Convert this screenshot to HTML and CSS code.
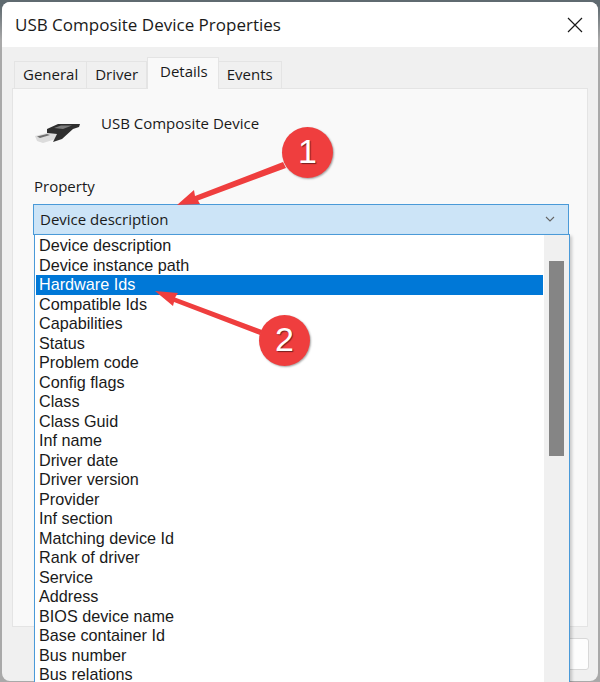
FILE: index.html
```html
<!DOCTYPE html>
<html lang="en">
<head>
    <meta charset="UTF-8">
    <meta name="viewport" content="width=device-width, initial-scale=1.0">
    <title>USB Composite Device Properties</title>
    <link rel="stylesheet" href="styles.css">
</head>
<body>
    <div class="window">
        <div class="titlebar">
            <span class="title">USB Composite Device Properties</span>
            <svg class="close" width="16" height="16" viewBox="0 0 16 16"><path d="M1 1L15 15M15 1L1 15" stroke="#1a1a1a" stroke-width="1.2" fill="none"/></svg>
        </div>
        <div class="content">
            <div class="tabs">
                <div class="tab">General</div>
                <div class="tab">Driver</div>
                <div class="tab active">Details</div>
                <div class="tab">Events</div>
            </div>
            <div class="panel">
                <div class="device">
                    <svg class="usb-icon" width="48" height="24" viewBox="0 0 48 24">
                        <path d="M1 14L13 11L23 12L22 17L9 21L3 19Z" fill="#dcdcdc"/>
                        <path d="M3 14.500L13 12L16 13L6 16Z" fill="#6f6f6f"/>
                        <path d="M13 7L24 2L41 2L46 2L45 5L39 7L28 17L19 20L23 12L13 11Z" fill="#2f2f2f"/>
                        <path d="M20 6L27 3.500L38 3.500L29 7Z" fill="#7c7c7c"/>
                    </svg>
                    <span class="device-name">USB Composite Device</span>
                </div>
                <div class="prop-label">Property</div>
                <div class="combo">
                    <span>Device description</span>
                    <svg width="10" height="6" viewBox="0 0 10 6"><path d="M1 1L5 5L9 1" stroke="#666" stroke-width="1.1" fill="none"/></svg>
                </div>
            </div>
            <div class="bottom-btn"></div>
        </div>
    </div>

    <div class="dropdown">
        <ul class="options">
            <li>Device description</li>
            <li>Device instance path</li>
            <li class="selected">Hardware Ids</li>
            <li>Compatible Ids</li>
            <li>Capabilities</li>
            <li>Status</li>
            <li>Problem code</li>
            <li>Config flags</li>
            <li>Class</li>
            <li>Class Guid</li>
            <li>Inf name</li>
            <li>Driver date</li>
            <li>Driver version</li>
            <li>Provider</li>
            <li>Inf section</li>
            <li>Matching device Id</li>
            <li>Rank of driver</li>
            <li>Service</li>
            <li>Address</li>
            <li>BIOS device name</li>
            <li>Base container Id</li>
            <li>Bus number</li>
            <li>Bus relations</li>
        </ul>
        <div class="scrollbar"><div class="thumb"></div></div>
    </div>

    <!-- red callouts on top of the dialog -->
    <svg class="arrows" width="600" height="682" viewBox="0 0 600 682">
        <path d="M177 205L194 190L195 196L283 162L286 168L198 200.500L200 204Z" fill="#ef3e3e"/>
        <path d="M155 291L178 293L175 297.500L262 330L260 335L174 302L173 306Z" fill="#ef3e3e"/>
    </svg>
    <div class="badge badge-one">1</div>
    <div class="badge badge-two">2</div>
</body>
</html>
```
FILE: styles.css
```css
html, body {
    margin: 0;
    padding: 0;
}
body {
    width: 600px;
    height: 682px;
    position: relative;
    overflow: hidden;
    background: linear-gradient(#5f6a70 0, #5f6a70 6px, #a9a9a9 40px);
    font-family: "Open Sans", "Noto Sans", sans-serif;
    color: #1a1a1a;
}
.window {
    margin: 2px 2px 0 2px;
    height: 679px;
    border-radius: 8px;
    background: #f0f0f0;
    overflow: hidden;
    display: flex;
    flex-direction: column;
}
.titlebar {
    height: 45px;
    flex: none;
    background: #fff;
    display: flex;
    align-items: center;
    justify-content: space-between;
    padding: 0 15px 0 13px;
}
.title {
    font-size: 17px;
}
.content {
    flex: 1;
    padding: 14px 10px 0 10px;
    display: flex;
    flex-direction: column;
}
.tabs {
    display: flex;
    padding-left: 2px;
    height: 27px;
    align-items: flex-end;
}
.tab {
    height: 27px;
    line-height: 25px;
    padding: 0 8px;
    font-size: 15px;
    background: #f0f0f0;
    border: 1px solid #e4e4e4;
    border-bottom: none;
    box-sizing: border-box;
    margin-right: -1px;
}
.tab.active {
    height: 32px;
    line-height: 26px;
    background: #f9f9f9;
    padding: 0 10px 0 12px;
    position: relative;
    margin-left: 1px;
    margin-bottom: -1px;
    z-index: 1;
}
.panel {
    height: 539px;
    background: #f9f9f9;
    border: 1px solid #e4e4e4;
    box-sizing: border-box;
    padding: 0 18px 0 20px;
}
.device {
    display: flex;
    height: 80px;
    padding-left: 3px;
}
.usb-icon {
    margin-top: 33px;
    margin-left: -2px;
    filter: blur(0.7px);
}
.device-name {
    font-size: 15px;
    margin-left: 19px;
    margin-top: 24px;
}
.prop-label {
    font-size: 15px;
    height: 35px;
    line-height: 34px;
    padding-left: 1px;
}
.combo {
    height: 31px;
    box-sizing: border-box;
    background: #cce4f7;
    border: 1px solid #4a9ad8;
    display: flex;
    align-items: center;
    justify-content: space-between;
    padding: 0 13px 2px 6px;
    font-size: 15px;
}
.bottom-btn {
    margin: 11px -1px 0 auto;
    width: 40px;
    height: 32px;
    box-sizing: border-box;
    background: #fdfdfd;
    border: 1px solid #d8d8d8;
    border-radius: 3px;
}
.dropdown {
    position: absolute;
    left: 34px;
    top: 234px;
    width: 536px;
    height: 448px;
    box-sizing: border-box;
    background: #fff;
    border: 1px solid #4a9ad8;
    border-bottom: none;
    display: flex;
    box-shadow: 2px 2px 3px rgba(0,0,0,0.2);
}
.options {
    list-style: none;
    margin: 0;
    padding: 1px 0 0 1px;
    width: 509px;
    flex: none;
    box-sizing: border-box;
    overflow: hidden;
    font-family: "Liberation Sans", sans-serif;
}
.options li {
    height: 19.5px;
    line-height: 19.5px;
    padding-left: 3px;
    font-size: 16.2px;
    white-space: nowrap;
}
.options li.selected {
    margin-right: 1px;
    background: #0078d7;
    color: #fff;
}
.scrollbar {
    flex: 1;
    background: #f0f0f0;
    padding: 26px 5px 0 5px;
}
.thumb {
    height: 195px;
    background: #858585;
}
.arrows {
    position: absolute;
    left: 0;
    top: 0;
}
.badge {
    position: absolute;
    width: 51px;
    height: 51px;
    border-radius: 50%;
    background: #ef3e3e;
    color: #fff;
    font-family: "Liberation Sans", sans-serif;
    font-size: 34px;
    line-height: 49px;
    text-align: center;
    text-shadow: 1px 1px 1px rgba(0,0,0,0.5);
    box-shadow: 1px 1px 2px rgba(0,0,0,0.35);
}
.badge-one {
    left: 282px;
    top: 127px;
}
.badge-two {
    left: 259px;
    top: 315px;
}
```
